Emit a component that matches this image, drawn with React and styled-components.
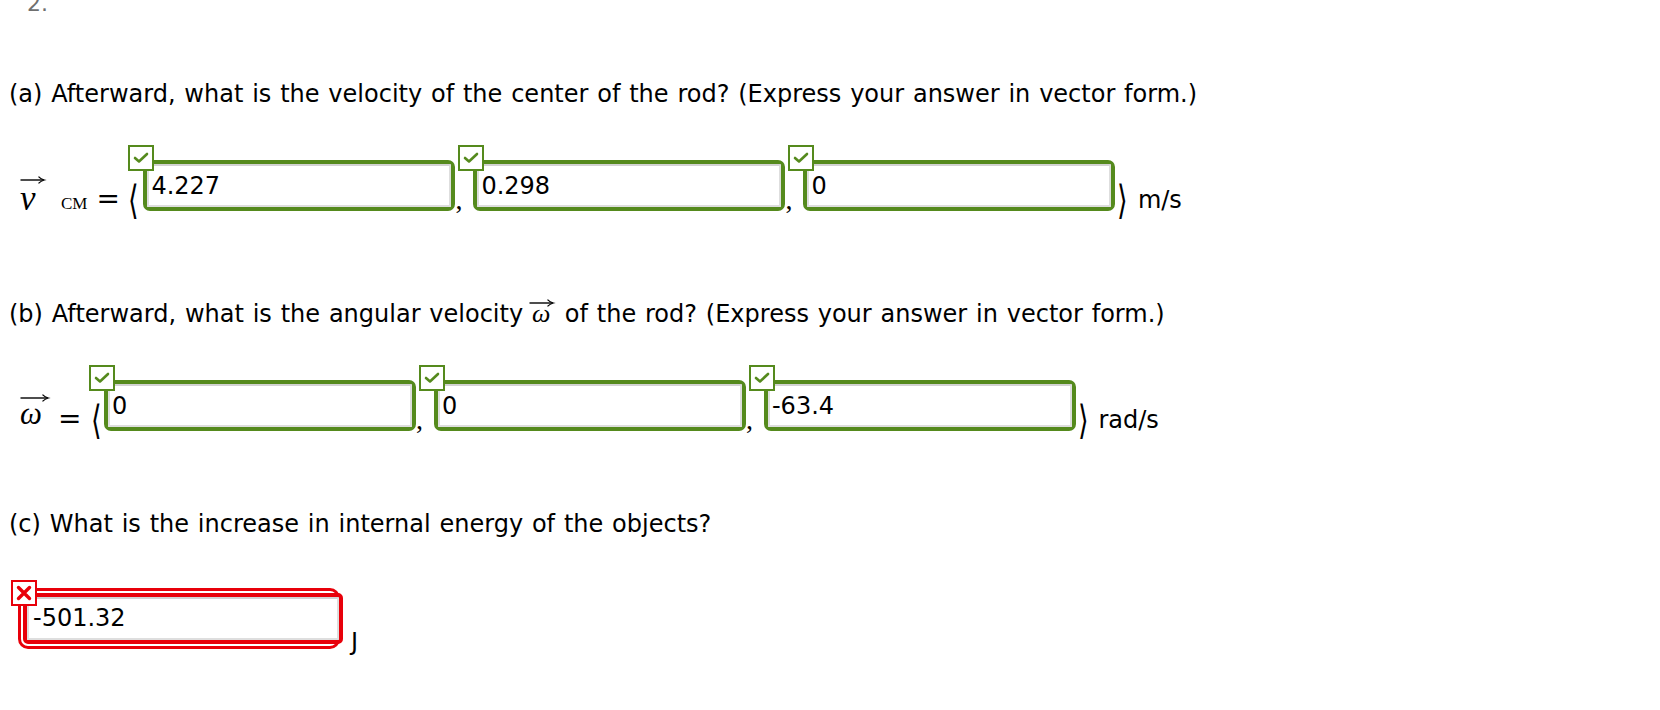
import React from "react";
import styled, { createGlobalStyle } from "styled-components";

const GREEN = "#558a1d";
const RED = "#e8000a";

const GlobalStyle = createGlobalStyle`
  html, body {
    margin: 0;
    padding: 0;
    background: #fff;
  }
  body {
    font-family: "DejaVu Sans", Verdana, sans-serif;
    color: #000;
  }
`;

const Page = styled.div`
  width: 1660px;
  height: 710px;
  overflow: hidden;
  box-sizing: border-box;
  padding-left: 9px;
`;

const Cutoff = styled.div`
  height: 14px;
  overflow: hidden;
  span {
    display: block;
    margin: -7px 0 0 18px;
    font-size: 22px;
    line-height: 22px;
    color: #6f6f6f;
  }
`;

const Question = styled.p`
  margin: ${({ $top }) => $top}px 0 0;
  font-size: 24px;
  line-height: 28px;
  word-spacing: 1.2px;
  white-space: nowrap;
`;

const Row = styled.div`
  display: flex;
  align-items: flex-end;
  margin-top: ${({ $top }) => $top}px;
  padding-left: ${({ $left }) => $left}px;
  height: ${({ $h }) => $h}px;
`;

const MathVec = styled.span`
  position: relative;
  display: inline-block;
  min-width: ${({ $w }) => $w}px;
  font-family: "Liberation Serif", "DejaVu Serif", serif;
  font-style: italic;
  font-size: ${({ $size }) => $size}px;
  line-height: 28px;
  word-spacing: 0;
  margin-bottom: ${({ $drop = 0 }) => $drop}px;
`;

const ArrowSvg = styled.svg`
  position: absolute;
  left: ${({ $left = 0 }) => $left}px;
  top: ${({ $top = 0 }) => $top}px;
  overflow: visible;
`;

const Sub = styled.span`
  font-family: "Liberation Serif", serif;
  font-size: 17px;
  line-height: 17px;
  margin-left: ${({ $gap }) => $gap}px;
  margin-bottom: -1px;
`;

const Equals = styled.span`
  font-family: "DejaVu Serif", "Liberation Serif", serif;
  font-size: 28px;
  line-height: 28px;
  margin-left: ${({ $gap }) => $gap}px;
  margin-bottom: -2px;
`;

const Bracket = styled.span`
  display: inline-block;
  font-family: "DejaVu Serif", "DejaVu Sans", serif;
  font-size: 32px;
  line-height: 32px;
  transform: scale(0.85, 1.25);
  margin: 0 ${({ $right = 0 }) => $right}px -5px ${({ $left = 0 }) => $left}px;
`;

const Comma = styled.span`
  width: 18px;
  font-family: "Liberation Serif", serif;
  font-size: 28px;
  line-height: 28px;
  margin-bottom: -3px;
`;

const Unit = styled.span`
  font-size: 24px;
  line-height: 28px;
  margin-left: ${({ $gap }) => $gap}px;
  margin-bottom: ${({ $drop = -3 }) => $drop}px;
`;

const Frame = styled.span`
  position: relative;
  display: flex;
  box-sizing: border-box;
  width: 312px;
  height: 51px;
  border: 4px solid ${GREEN};
  border-radius: 7px;
  background: #fff;
`;

const RedFrame = styled.span`
  position: relative;
  display: flex;
  box-sizing: border-box;
  width: 322px;
  height: 61px;
  padding: 2px;
  border: 3px solid ${RED};
  border-radius: 10px;
  background: #fff;
`;

const RedInner = styled.span`
  display: flex;
  flex: 1;
  border: 4px solid ${RED};
  border-radius: 5px;
`;

const Input = styled.input`
  flex: 1;
  min-width: 0;
  box-sizing: border-box;
  height: 100%;
  margin: 0;
  padding: 7px 2px 7px;
  border: 2px solid #dedede;
  border-top-color: #d2d2d2;
  border-radius: 1px;
  background: #fff;
  color: #000;
  font-family: "DejaVu Sans", Verdana, sans-serif;
  font-size: 24px;
  outline: none;
`;

const RedInput = styled(Input)`
  padding: 7px 4px 8px;
`;

const Badge = styled.span`
  position: absolute;
  left: ${({ $x }) => $x}px;
  top: ${({ $y }) => $y}px;
  z-index: 1;
  display: flex;
  align-items: center;
  justify-content: center;
  box-sizing: border-box;
  width: 26px;
  height: 26px;
  border: 2px solid ${({ $color }) => $color};
  background: #fff;
`;

const Arrow = ({ w, top = 0, left = 0 }) => (
  <ArrowSvg width={w} height="8" viewBox={`0 0 ${w} 8`} $top={top} $left={left}>
    <path d={`M0.5 4 H${w - 1.5}`} stroke="#000" strokeWidth="1.4" />
    <path
      d={`M${w - 6.5} 0.6 Q${w - 4.2} 3 ${w - 0.7} 4 Q${w - 4.2} 5 ${w - 6.5} 7.4`}
      fill="none"
      stroke="#000"
      strokeWidth="1.3"
    />
  </ArrowSvg>
);

const CheckIcon = () => (
  <svg width="22" height="22" viewBox="0 0 22 22">
    <path
      d="M5 11 L9 14.5 L17 7"
      fill="none"
      stroke={GREEN}
      strokeWidth="2.6"
      strokeLinecap="round"
      strokeLinejoin="round"
    />
  </svg>
);

const CrossIcon = () => (
  <svg width="22" height="22" viewBox="0 0 22 22">
    <path
      d="M5.5 5.5 L16.5 16.5 M16.5 5.5 L5.5 16.5"
      stroke={RED}
      strokeWidth="3.4"
      strokeLinecap="round"
    />
  </svg>
);

const Answer = ({ value }) => (
  <Frame>
    <Badge $x={-19} $y={-19} $color={GREEN}>
      <CheckIcon />
    </Badge>
    <Input readOnly value={value} />
  </Frame>
);

const WrongAnswer = ({ value }) => (
  <RedFrame>
    <Badge $x={-10} $y={-11} $color={RED}>
      <CrossIcon />
    </Badge>
    <RedInner>
      <RedInput readOnly value={value} />
    </RedInner>
  </RedFrame>
);

const VectorAnswer = ({ values, unit, open }) => (
  <>
    <Bracket $left={open[0]} $right={open[1]}>⟨</Bracket>
    <Answer value={values[0]} />
    <Comma>,</Comma>
    <Answer value={values[1]} />
    <Comma>,</Comma>
    <Answer value={values[2]} />
    <Bracket $left={1}>⟩</Bracket>
    <Unit $gap={9}>{unit}</Unit>
  </>
);

export default function App() {
  return (
    <Page>
      <GlobalStyle />
      <Cutoff>
        <span>2.</span>
      </Cutoff>

      <Question $top={66}>
        (a) Afterward, what is the velocity of the center of the rod? (Express your answer in vector form.)
      </Question>
      <Row $top={52} $left={11} $h={51}>
        <MathVec $w={26} $size={35} $drop={-2}>
          <Arrow w={25} top={-9} />v
        </MathVec>
        <Sub $gap={15}>CM</Sub>
        <Equals $gap={9}>=</Equals>
        <VectorAnswer values={["4.227", "0.298", "0"]} unit="m/s" open={[7, 4]} />
      </Row>

      <Question $top={89}>
        (b) Afterward, what is the angular velocity{" "}
        <MathVec $w={24} $size={26}>
          <Arrow w={25} top={-1} left={-3} />ω
        </MathVec>{" "}
        of the rod? (Express your answer in vector form.)
      </Question>
      <Row $top={52} $left={11} $h={51}>
        <MathVec $w={29} $size={31} $drop={3}>
          <Arrow w={29} top={-6} />ω
        </MathVec>
        <Equals $gap={9}>=</Equals>
        <VectorAnswer values={["0", "0", "-63.4"]} unit="rad/s" open={[9, 1]} />
      </Row>

      <Question $top={79}>(c) What is the increase in internal energy of the objects?</Question>
      <Row $top={50} $left={9} $h={61}>
        <WrongAnswer value="-501.32" />
        <Unit $gap={11} $drop={-7}>
          J
        </Unit>
      </Row>
    </Page>
  );
}
